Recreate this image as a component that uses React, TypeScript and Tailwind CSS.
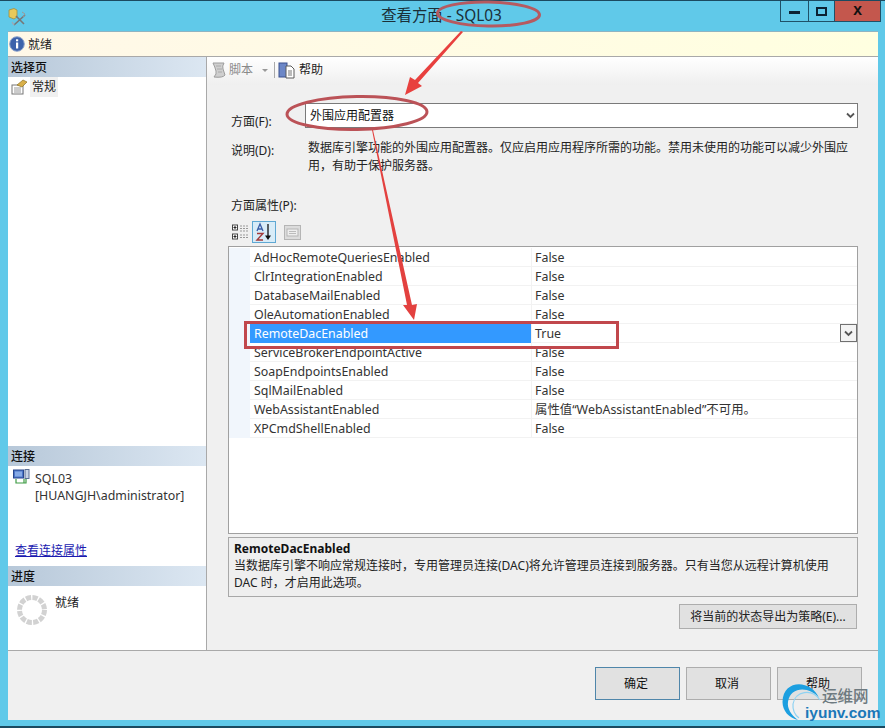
import React from "react";

const font = { fontFamily: '"Noto Sans", "Noto Sans CJK SC", sans-serif' };

const rows: [string, string][] = [
  ["AdHocRemoteQueriesEnabled", "False"],
  ["ClrIntegrationEnabled", "False"],
  ["DatabaseMailEnabled", "False"],
  ["OleAutomationEnabled", "False"],
  ["RemoteDacEnabled", "True"],
  ["ServiceBrokerEndpointActive", "False"],
  ["SoapEndpointsEnabled", "False"],
  ["SqlMailEnabled", "False"],
  ["WebAssistantEnabled", "属性值“WebAssistantEnabled”不可用。"],
  ["XPCmdShellEnabled", "False"],
];

function Chevron({ className = "" }: { className?: string }) {
  return (
    <svg width="9" height="7" viewBox="0 0 9 7" className={className}>
      <path d="M1 1.5 L4.5 5 L8 1.5" fill="none" stroke="#555" strokeWidth="1.8" />
    </svg>
  );
}

function SectionHeader({ children }: { children: React.ReactNode }) {
  return (
    <div className="h-[20px] shrink-0 leading-[21px] pl-[3px] bg-linear-to-r from-[#b7c8d9] to-[#dce7f2] text-[12px] text-[#111] font-medium">
      {children}
    </div>
  );
}

function ToolIcon() {
  return (
    <svg width="18" height="18" viewBox="0 0 18 18">
      <path d="M1 2 L6 0.500 L9 2 V9 L6 11 L1 9 Z" fill="#e8c95a" stroke="#a58f3a" strokeWidth="0.8" />
      <path d="M6 17 L17 7 M8 8 L16 16" stroke="#777" strokeWidth="1.6" />
      <path d="M14 4 L17 6 L15 9" fill="none" stroke="#999" />
      <path d="M4 14 L6 17" stroke="#9ab" strokeWidth="1.4" />
    </svg>
  );
}

function InfoIcon() {
  return (
    <svg width="16" height="16" viewBox="0 0 16 16">
      <circle cx="8" cy="8" r="7.3" fill="#3c62ab" stroke="#8ea4cc" />
      <rect x="7" y="6.5" width="2.2" height="6" fill="#fff" />
      <rect x="7" y="3.3" width="2.2" height="2" fill="#fff" />
    </svg>
  );
}

function GeneralIcon() {
  return (
    <svg width="17" height="16" viewBox="0 0 17 16">
      <rect x="1" y="6" width="11" height="9" fill="#fff" stroke="#777" />
      <path d="M3 9 H10 M3 11 H10 M3 13 H10" stroke="#999" />
      <path d="M6 6 L12 1 L16 3 L11 8 Z" fill="#d9b04a" stroke="#8d7326" strokeWidth="0.7" />
    </svg>
  );
}

function ServerIcon() {
  return (
    <svg width="17" height="17" viewBox="0 0 17 17">
      <rect x="0.5" y="1" width="10" height="8" fill="#4d76c9" stroke="#27478c" />
      <rect x="2" y="2.5" width="7" height="5" fill="#86aae6" />
      <rect x="12" y="0.5" width="4" height="9" fill="#c9d4e6" stroke="#5b6f94" />
      <path d="M3 10 V14 H11 V10 M13 10 V14 H11" fill="none" stroke="#3f9c45" strokeWidth="1.2" />
    </svg>
  );
}

function ScriptIcon() {
  return (
    <svg width="18" height="18" viewBox="0 0 18 18">
      <path d="M3 2 H14 Q12 5 13 8 Q14 11 15 14 Q13 17 4 16 Q7 13 6 10 Q5 6 3 2 Z" fill="#cfcfcf" stroke="#9c9c9c" />
      <path d="M6 5 H11 M7 8 H12 M8 11 H12" stroke="#aaa" />
    </svg>
  );
}

function HelpDocIcon() {
  return (
    <svg width="17" height="17" viewBox="0 0 17 17">
      <rect x="1" y="1" width="8" height="14" fill="#6c87c7" stroke="#3a518e" />
      <path d="M8 4 H13 L16 7 V16 H8 Z" fill="#fff" stroke="#5a5a5a" />
      <path d="M10 9 H14 M10 11 H14 M10 13 H14" stroke="#777" />
    </svg>
  );
}

function GroupIcon() {
  return (
    <svg width="17" height="17" viewBox="0 0 17 17">
      <rect x="0.5" y="1" width="5" height="5" fill="#fff" stroke="#444" />
      <path d="M1.5 3.5 H4.5 M3 2 V5" stroke="#222" />
      <rect x="0.5" y="10" width="5" height="5" fill="#fff" stroke="#444" />
      <path d="M1.5 12.5 H4.5 M3 11 V14" stroke="#222" />
      <path d="M8 2 H16 M8 4.5 H16 M8 7 H16 M8 11 H16 M8 13.5 H16" stroke="#999" strokeDasharray="2 1" />
    </svg>
  );
}

function SortIcon() {
  return (
    <svg width="18" height="20" viewBox="0 0 18 20">
      <path d="M2 9 L5 2 L8 9 M3.2 7 H6.8" fill="none" stroke="#3a5ea8" strokeWidth="1.3" />
      <path d="M2 11.5 H8 L2 18 H8" fill="none" stroke="#a33a3a" strokeWidth="1.4" />
      <path d="M13 2 V16" stroke="#111" strokeWidth="1.3" />
      <path d="M10 13.5 L13 18 L16 13.5 Z" fill="#111" />
    </svg>
  );
}

function PagesIcon() {
  return (
    <svg width="17" height="15" viewBox="0 0 17 15">
      <rect x="0.5" y="0.5" width="16" height="14" fill="#dcdcdc" stroke="#b5b5b5" />
      <rect x="3" y="4" width="11" height="7" fill="#eee" stroke="#b5b5b5" />
      <path d="M5 6.5 H12 M5 8.5 H12" stroke="#bbb" />
    </svg>
  );
}

function Spinner() {
  return (
    <svg width="32" height="32" viewBox="0 0 32 32">
      <circle cx="16" cy="16" r="12.5" fill="none" stroke="#d2d2d2" strokeWidth="5" strokeDasharray="5.2 1.35" />
    </svg>
  );
}

function FooterButton({ label, active }: { label: string; active?: boolean }) {
  return (
    <button
      className={`w-[85px] h-[33px] pr-[3px] bg-[#e1e1e1] border text-[12px] text-[#111] ${active ? "border-[#4f86aa]" : "border-[#adadad]"}`}
    >
      {label}
    </button>
  );
}

function Annotations() {
  return (
    <svg width="885" height="728" viewBox="0 0 885 728" className="absolute left-0 top-0 pointer-events-none">
      <ellipse cx="488.5" cy="14" rx="51" ry="12" fill="none" stroke="#b65a60" strokeWidth="3" transform="rotate(1 488 14)" />
      <ellipse cx="357" cy="113" rx="70" ry="16.5" fill="none" stroke="#bb5257" strokeWidth="3" transform="rotate(-1 357 113)" />
      <polygon points="463,32 461,31 415,80 410,77 405,95 422,86 418,83" fill="#e8403e" />
      <polygon points="372,130 373,130 412,305 417,304 414,320 403,305 407,305" fill="#e3413f" />
      <rect x="245.5" y="322.5" width="372" height="25" fill="none" stroke="#c1474c" strokeWidth="3" />
    </svg>
  );
}

function Watermark() {
  return (
    <div className="absolute left-[782px] top-[678px] w-[103px] h-[46px] pointer-events-none">
      <svg width="40" height="46" viewBox="0 0 40 46" className="absolute left-0 top-0">
        <path d="M37 20 C30 2 1 0 0.500 24 C0.500 33 7 40 16 42 C9 37 5 30 6 24 C8 8 28 8 37 20 Z" fill="#1c9fe0" />
        <path d="M38 22 C30 10 13 13 11 26 C10.500 32 13 37 17 40" fill="none" stroke="#8fd2f2" strokeWidth="1.2" />
      </svg>
      <span className="absolute left-[40px] top-[9px] text-[15.500px] leading-[18px] text-[#6e7a80] font-medium whitespace-nowrap">运维网</span>
      <span className="absolute left-[23px] top-[26px] text-[15.500px] leading-[18px] text-[#1b78b8] font-bold whitespace-nowrap" style={{ fontFamily: '"Liberation Sans", sans-serif' }}>iyunv.com</span>
    </div>
  );
}

export default function App() {
  return (
    <div className="relative w-[885px] h-[728px] overflow-hidden bg-[#60c9e9] flex flex-col text-[12px] text-[#222]" style={font}>
      <div className="h-[31px] shrink-0 border-t border-[#1b4a60] flex items-start relative">
        <div className="pl-[8px] pt-[7px]"><ToolIcon /></div>
        <div className="flex-1 text-center text-[15.400px] leading-[30px] text-[#1a2f38] pl-[77px]">查看方面 - SQL03</div>
        <div className="flex h-[21px] mr-[4px] border-x border-b border-[#1f5168]">
          <div className="w-[28px] flex items-center justify-center border-r border-[#1f5168]">
            <div className="w-[11px] h-[3px] mt-[3px] bg-[#0c2333]" />
          </div>
          <div className="w-[25px] flex items-center justify-center">
            <div className="w-[11px] h-[9px] border-2 border-[#0c2333]" />
          </div>
          <div className="w-[46px] flex items-center justify-center bg-[#c4574d] border-l border-[#1f5168] text-[13px] font-bold text-[#111]">X</div>
        </div>
      </div>

      <div className="ml-[8px] w-[870px] h-[689px] shrink-0 border-t border-[#8fb4c2] bg-[#f0f0f0] flex flex-col">
        <div className="h-[25px] shrink-0 bg-linear-to-r from-[#fff8e8] to-[#ffffe0] border-b border-[#a9a9a9] flex items-center pl-[1px] gap-[3px]">
          <InfoIcon />
          <span className="pt-[2px]">就绪</span>
        </div>

        <div className="flex flex-1 min-h-0">
          <div className="w-[199px] shrink-0 bg-white border-r border-[#a9a9a9] flex flex-col">
            <SectionHeader>选择页</SectionHeader>
            <div className="h-[20px] flex items-center pl-[3px] gap-[2px]">
              <GeneralIcon />
              <span className="h-[20px] leading-[20px] px-[2px] bg-[#f0f0f0]">常规</span>
            </div>
            <div className="flex-1" />
            <SectionHeader>连接</SectionHeader>
            <div className="h-[100px] flex flex-col">
              <div className="flex pl-[5px] pt-[3px] gap-[5px]">
                <ServerIcon />
                <div className="leading-[17px] pt-[1px] whitespace-nowrap text-[#333] text-[12.400px]">
                  <div>SQL03</div>
                  <div>[HUANGJH\administrator]</div>
                </div>
              </div>
              <a className="mt-auto mb-[6px] ml-[7px] text-[#1a1ab0] underline leading-[18px]">查看连接属性</a>
            </div>
            <SectionHeader>进度</SectionHeader>
            <div className="h-[64px] flex pl-[8px] pt-[8px] gap-[7px]">
              <Spinner />
              <span className="leading-[18px]">就绪</span>
            </div>
          </div>

          <div className="flex-1 flex flex-col min-w-0">
            <div className="h-[28px] shrink-0 bg-linear-to-b from-[#ffffff] to-[#efefef] flex items-center pl-[3px] pb-[2px]">
              <ScriptIcon />
              <span className="ml-[1px] text-[#8a8a8a]">脚本</span>
              <span className="ml-[9px] w-0 h-0 border-x-[3px] border-t-[3px] border-x-transparent border-t-[#999]" />
              <span className="ml-[6px] w-px h-[16px] bg-[#aaa]" />
              <span className="ml-[3px]"><HelpDocIcon /></span>
              <span className="ml-[4px] text-[#222]">帮助</span>
            </div>

            <div className="flex-1 flex flex-col pl-[21px] pr-[20px] pt-[18px]">
              <div className="flex h-[25px] items-center">
                <span className="w-[77px] pl-[3px] pt-[12px]">方面(F):</span>
                <div className="flex-1 h-[25px] bg-white border border-[#7a7a7a] flex items-center pl-[4px] pr-[2px] justify-between text-[#111]">
                  <span>外围应用配置器</span>
                  <Chevron />
                </div>
              </div>

              <div className="flex mt-[11px] leading-[18px]">
                <span className="w-[80px] pl-[3px] pt-[3px]">说明(D):</span>
                <div className="whitespace-nowrap">
                  <div>数据库引擎功能的外围应用配置器。仅应启用应用程序所需的功能。禁用未使用的功能可以减少外围应</div>
                  <div>用，有助于保护服务器。</div>
                </div>
              </div>

              <div className="mt-[22px] pl-[3px] leading-[18px]">方面属性(P):</div>

              <div className="flex items-center h-[22px] mt-[6px] pl-[4px] gap-[3px]">
                <GroupIcon />
                <div className="w-[24px] h-[22px] bg-[#d8ecf8] border border-[#5fa8d3] flex items-center justify-center"><SortIcon /></div>
                <span className="ml-[5px]"><PagesIcon /></span>
              </div>

              <div className="mt-[3px] h-[288px] bg-white border border-[#a0a0a0] pt-[1px] relative">
                {rows.map(([name, value]) => {
                  const sel = name === "RemoteDacEnabled";
                  return (
                    <div key={name} className="flex h-[19px] leading-[20px] text-[12.400px]">
                      <div className="w-[21px] shrink-0 bg-[#f1f6fc]" />
                      <div className={`w-[281px] shrink-0 pl-[4px] ${sel ? "bg-[#3399ff] text-white" : "border-b border-[#f2f2f2] text-[#333]"}`}>{name}</div>
                      <div className="flex-1 border-l border-b border-[#f2f2f2] pl-[3px] text-[#333] whitespace-nowrap">{value}</div>
                    </div>
                  );
                })}
                <div className="absolute right-0 top-[77px] w-[17px] h-[18px] bg-[#f3f3f3] border border-[#707070] flex items-center justify-center">
                  <Chevron />
                </div>
              </div>

              <div className="mt-[3px] h-[60px] border border-[#a8a8a8] bg-[#efefef] px-[5px] pt-[2px] leading-[17px]">
                <div className="font-bold text-[#111]">RemoteDacEnabled</div>
                <div className="whitespace-nowrap">当数据库引擎不响应常规连接时，专用管理员连接(DAC)将允许管理员连接到服务器。只有当您从远程计算机使用</div>
                <div className="whitespace-nowrap">DAC 时，才启用此选项。</div>
              </div>

              <div className="flex justify-end mt-[7px] pr-[1px]">
                <button className="w-[178px] h-[25px] bg-[#e1e1e1] border border-[#adadad] text-[12px] text-[#222]">将当前的状态导出为策略(E)...</button>
              </div>
            </div>
          </div>
        </div>

        <div className="h-[70px] shrink-0 border-t border-[#a9a9a9] flex justify-end items-start pt-[16px] pr-[16px] gap-[6px]">
          <FooterButton label="确定" active />
          <FooterButton label="取消" />
          <FooterButton label="帮助" />
        </div>
      </div>

      <div className="flex-1 border-b-2 border-[#1b4a60]" />

      <Annotations />
      <Watermark />
    </div>
  );
}
